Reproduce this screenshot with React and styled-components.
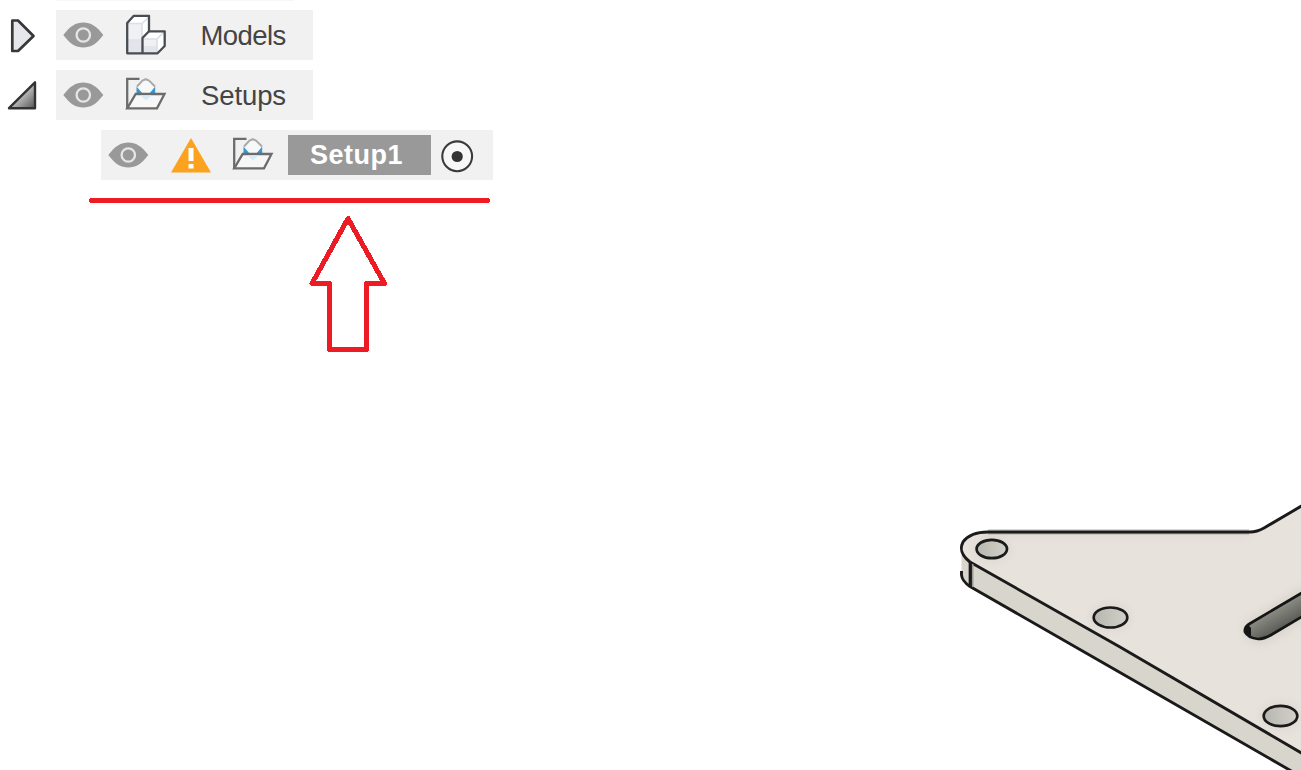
import React from "react";
import styled, { createGlobalStyle } from "styled-components";

const Global = createGlobalStyle`
  html, body { margin: 0; padding: 0; background: #fff; }
  body { overflow: hidden; }
`;

const Viewport = styled.main`
  position: relative;
  width: 1301px;
  height: 770px;
  overflow: hidden;
  background: #fff;
  font-family: "Liberation Sans", Arial, sans-serif;
`;

const Tree = styled.div`
  display: flex;
  flex-direction: column;
  gap: 10px;
`;

const PreviousRow = styled.div`
  width: 237px;
  height: 1px;
  margin: 0 0 -1px 57px;
  background: #f7f7f7;
`;

const TreeRow = styled.div`
  display: flex;
  height: 50px;
  padding-left: ${(p) => (p.$nested ? 101 : 0)}px;
`;

const Expander = styled.div`
  display: flex;
  width: 56px;
  height: 50px;
`;

const Item = styled.div`
  display: flex;
  align-items: center;
  box-sizing: border-box;
  width: ${(p) => p.$width}px;
  height: 50px;
  background: #f1f1f1;
`;

const Icon = styled.svg`
  display: block;
  flex: none;
  height: 50px;
  width: ${(p) => p.$width}px;
`;

const Label = styled.span`
  margin-left: ${(p) => p.$indent || 0}px;
  padding-top: 1px;
  font-size: 27.5px;
  line-height: 40px;
  letter-spacing: ${(p) => p.$spacing || 0}px;
  color: #444;
  white-space: nowrap;
`;

const SelectedLabel = styled.span`
  box-sizing: border-box;
  width: 143px;
  height: 40px;
  padding-left: 22px;
  background: #999;
  color: #fff;
  font-size: 27px;
  font-weight: 700;
  line-height: 41px;
  letter-spacing: 0.5px;
  white-space: nowrap;
`;

const Overlay = styled.svg`
  position: absolute;
  left: ${(p) => p.$x}px;
  top: ${(p) => p.$y}px;
  pointer-events: none;
`;

const Collapsed = () => (
  <Icon $width={56} viewBox="0 0 56 50">
    <path d="M12.3 10.5H18L33.5 26L18 41H12.3Z" fill="#e6e7ea" stroke="#383838" strokeWidth="2.7" strokeLinejoin="round" />
  </Icon>
);

const Expanded = () => (
  <Icon $width={56} viewBox="0 0 56 50">
    <defs>
      <linearGradient id="fold" x1="0.3" y1="0.3" x2="1" y2="1">
        <stop offset="0" stopColor="#e4e4e4" />
        <stop offset="1" stopColor="#555" />
      </linearGradient>
    </defs>
    <path d="M35 12.3V38.2H9Z" fill="url(#fold)" stroke="#333" strokeWidth="2.4" strokeLinejoin="round" />
  </Icon>
);

const Eye = () => (
  <Icon $width={54} viewBox="0 0 54 50">
    <path d="M7.3 25C14 16 20 12.5 27.3 12.5S40.6 16 47.3 25C40.6 34 34.6 37.5 27.3 37.5S14 34 7.3 25Z" fill="#999" />
    <circle cx="27.3" cy="25" r="6.7" fill="#999" stroke="#e6e6e6" strokeWidth="2.3" />
  </Icon>
);

const Models = () => (
  <Icon $width={70} viewBox="54 0 70 50">
    <path d="M71.2 13L77.8 5.8H93V21.3H108.7V36L101.5 43.3H71.2Z" fill="#fff" />
    <path d="M71.5 13H86V29H71.5ZM87 29H101V43H87Z" fill="#f0f1f5" />
    <path d="M72 30.5H86V43H72ZM87 36H101V43H87Z" fill="#e3e5eb" />
    <path d="M72 13.5H86L93 7M86 14V27M88 29H101V42M101 29L108 22M72 30H86" fill="none" stroke="#dcdee4" strokeWidth="1.6" />
    <path d="M71.2 13L77.8 5.8H93V21.3H108.7V36L101.5 43.3H71.2Z" fill="none" stroke="#484c53" strokeWidth="2.3" strokeLinejoin="round" />
    <path d="M93 21.3L86.5 28V43" fill="none" stroke="#484c53" strokeWidth="2.3" />
  </Icon>
);

const Folder = ({ width = 70, left = 54 }) => (
  <Icon $width={width} viewBox={`${left} 0 ${width} 50`}>
    <path d="M71.2 38.4V8.8H83.5" fill="none" stroke="#6c6c6c" strokeWidth="2.3" />
    <path d="M81 17L86.5 10.5L89.8 9.2L93 10.5L99 17V24H81Z" fill="#f7f8f9" />
    <path d="M80.5 16.5L87 24H80.5ZM99.2 16.5V24H93Z" fill="#3996d0" />
    <path d="M81 16.5L86.5 10.5L89.8 9.2L93 10.5L99 16.5" fill="none" stroke="#aaa" strokeWidth="2" />
    <path d="M79.7 24H108.5L101 38.4H71.2Z" fill="#f7f7f7" stroke="#6c6c6c" strokeWidth="2.3" strokeLinejoin="miter" />
    <path d="M84.5 25.5H95.5L90 30.5Z" fill="#d7ebf8" />
  </Icon>
);

const Warning = () => (
  <Icon $width={66} viewBox="0 0 66 50">
    <path d="M36 8L56 42.5H16Z" fill="#fda21f" />
    <path d="M33.5 18H38.5V31H33.5ZM33.5 34H38.5V38.5H33.5Z" fill="#fff" />
  </Icon>
);

const Active = () => (
  <Icon $width={61} viewBox="0 0 61 50">
    <circle cx="26.2" cy="26.3" r="14.9" fill="#f7f7f7" stroke="#3a3a3a" strokeWidth="2.1" />
    <circle cx="26.2" cy="26.5" r="5.6" fill="#333" />
  </Icon>
);

const Annotation = () => (
  <Overlay $x={80} $y={190} width="420" height="170" viewBox="80 190 420 170">
    <g fill="none" stroke="#ed1c24" strokeWidth="5" strokeLinecap="round" strokeLinejoin="round" shapeRendering="crispEdges">
      <path d="M91.5 200.5H487.5" />
      <path d="M348 218.5L312 283.5H329.5V349.5H366.5V283.5H384.5Z" />
    </g>
  </Overlay>
);

const holes = [
  { x: 991.8, y: 549, rx: 15.2, ry: 9.2 },
  { x: 1110.5, y: 617.5, rx: 16.8, ry: 10 },
  { x: 1280.5, y: 716, rx: 16.8, ry: 10.2 },
];

const Plate = () => (
  <Overlay $x={951} $y={490} width="350" height="280" viewBox="951 490 350 280">
    <defs>
      <linearGradient id="hole">
        <stop offset="0" stopColor="#b7b7af" />
        <stop offset="1" stopColor="#d1d0c9" />
      </linearGradient>
      <linearGradient id="slot" gradientUnits="userSpaceOnUse" x1="1275" y1="610" x2="1286" y2="629">
        <stop offset="0" stopColor="#898a82" />
        <stop offset="1" stopColor="#555650" />
      </linearGradient>
      <filter id="shade" filterUnits="userSpaceOnUse" x="940" y="480" width="380" height="300" colorInterpolationFilters="sRGB">
        <feGaussianBlur stdDeviation="4" />
      </filter>
      <clipPath id="surface">
        <path d="M970 562C960 554 960 548 963 542C968 535 976 532 988 532H1250Q1257 532 1264 528L1310 501V759Z" />
      </clipPath>
    </defs>
    <path d="M961.5 548V573Q962 581 970 586.5L1120 672.5L1300 776H1310V757L970 562Z" fill="#d8d6cc" />
    <path d="M970 562C960 554 960 548 963 542C968 535 976 532 988 532H1250Q1257 532 1264 528L1310 501V759L1120 647Z" fill="#e7e2dc" />
    <g clipPath="url(#surface)">
      <g filter="url(#shade)" fill="none" stroke="#b5afa3" opacity="0.3">
        <path d="M984 533H1250" strokeWidth="4" />
        <path d="M1310 588L1252 623Q1243 633 1256 639H1264L1310 613" strokeWidth="8" />
        {holes.map((h) => <ellipse key={h.x} cx={h.x} cy={h.y} rx={h.rx} ry={h.ry} strokeWidth="4" />)}
      </g>
    </g>
    <path d="M988 530H1249" stroke="#ccc" strokeWidth="1.5" />
    <path d="M988 533.7H1249" stroke="#b5b0aa" strokeWidth="1.5" />
    <g fill="none" stroke="#1a1a1a" strokeWidth="2.9" strokeLinejoin="round">
      <path d="M1310 501L1264 528Q1257 532 1250 532H988C976 532 968 535 963 542C960 548 960 554 970 562L1120 647L1310 758" />
      <path d="M961.5 571V575Q962 581 970 586.5L1120 672.5L1300 776" />
      <path d="M970.3 562V586" strokeWidth="3.3" />
    </g>
    <path d="M972.7 564V587" stroke="#99998f" strokeWidth="1.5" />
    {holes.map((h) => (
      <ellipse key={h.x} cx={h.x} cy={h.y} rx={h.rx} ry={h.ry} fill="url(#hole)" stroke="#1a1a1a" strokeWidth="2.7" />
    ))}
    <path d="M1310 588L1250 623.5Q1244 627 1245 632Q1248 638 1258 639Q1264 639 1271 635L1310 612Z" fill="url(#slot)" stroke="#151515" strokeWidth="2.7" />
    <path d="M1248 624.5L1251 628V637L1245 632Z" fill="#151515" />
  </Overlay>
);

export default function App() {
  return (
    <Viewport>
      <Global />
      <Tree>
        <PreviousRow />
        <TreeRow>
          <Expander><Collapsed /></Expander>
          <Item $width={257}>
            <Eye />
            <Models />
            <Label $indent={20.5} $spacing={-0.6}>Models</Label>
          </Item>
        </TreeRow>
        <TreeRow>
          <Expander><Expanded /></Expander>
          <Item $width={257}>
            <Eye />
            <Folder />
            <Label $indent={21} $spacing={-0.1}>Setups</Label>
          </Item>
        </TreeRow>
        <TreeRow $nested>
          <Item $width={392}>
            <Eye />
            <Warning />
            <Folder width={67} left={58} />
            <SelectedLabel>Setup1</SelectedLabel>
            <Active />
          </Item>
        </TreeRow>
      </Tree>
      <Annotation />
      <Plate />
    </Viewport>
  );
}
